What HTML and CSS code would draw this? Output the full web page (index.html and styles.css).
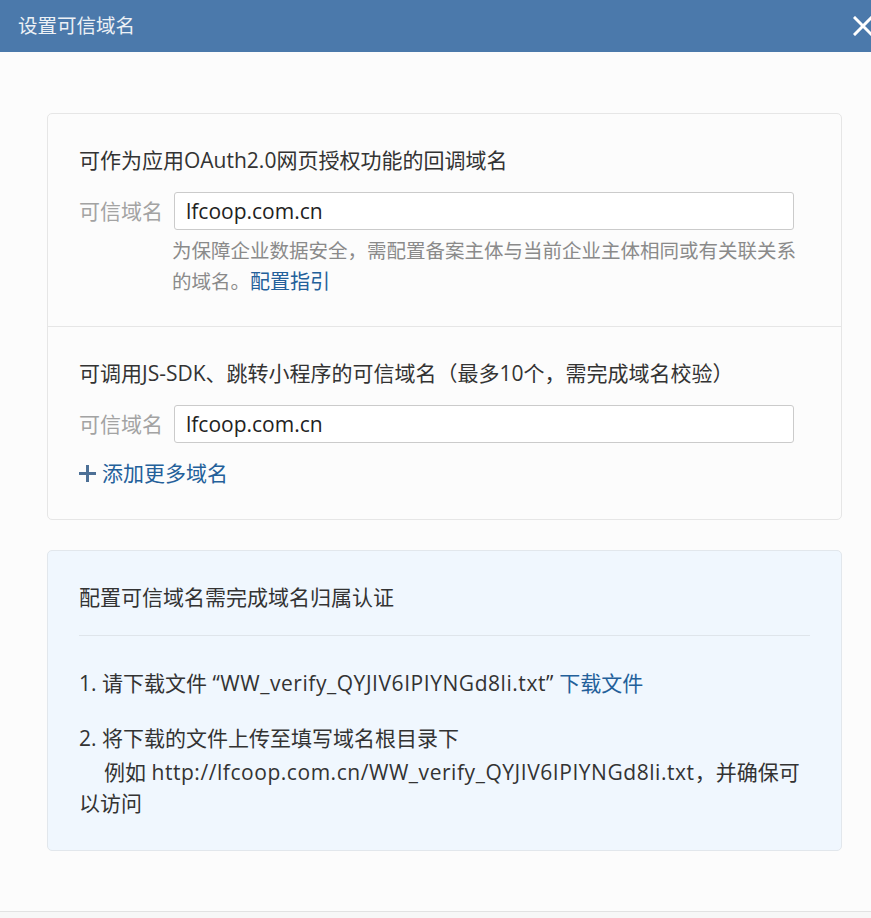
FILE: index.html
```html
<!DOCTYPE html>
<html lang="zh-CN">
<head>
<meta charset="utf-8">
<title>设置可信域名</title>
<link rel="stylesheet" href="styles.css">
</head>
<body>
<div class="dialog">
  <div class="dlg-head">
    <div class="dlg-title">设置可信域名</div>
    <svg class="dlg-close" width="20" height="20" viewBox="0 0 20 20"><path d="M2 2 L18 18 M18 2 L2 18" stroke="#ffffff" stroke-width="3" stroke-linecap="square" fill="none"/></svg>
  </div>
  <div class="dlg-body">
    <div class="card">
      <div class="section sec-one">
        <div class="sec-title">可作为应用OAuth2.0网页授权功能的回调域名</div>
        <div class="field">
          <span class="field-label">可信域名</span>
          <div class="field-input">lfcoop.com.cn</div>
        </div>
        <div class="hint">为保障企业数据安全，需配置备案主体与当前企业主体相同或有关联关系的域名。<a class="link">配置指引</a></div>
      </div>
      <div class="section sec-two">
        <div class="sec-title">可调用JS-SDK、跳转小程序的可信域名（最多10个，需完成域名校验）</div>
        <div class="field">
          <span class="field-label">可信域名</span>
          <div class="field-input">lfcoop.com.cn</div>
        </div>
        <div class="add-more">
          <svg class="plus" width="17" height="17" viewBox="0 0 17 17"><path d="M8.5 0 V17 M0 8.5 H17" stroke="#4d7096" stroke-width="3" fill="none"/></svg>
          <a class="link">添加更多域名</a>
        </div>
      </div>
    </div>
    <div class="verify">
      <div class="verify-title">配置可信域名需完成域名归属认证</div>
      <div class="verify-sep"></div>
      <div class="step">1. 请下载文件 <span class="latin">“WW_verify_QYJIV6IPIYNGd8li.txt”</span> <a class="link">下载文件</a></div>
      <div class="step step-two">2. 将下载的文件上传至填写域名根目录下</div>
      <div class="step-note">例如 <span class="latin">http://lfcoop.com.cn/WW_verify_QYJIV6IPIYNGd8li.txt</span>，并确保可以访问</div>
    </div>
  </div>
  <div class="dlg-foot"></div>
</div>
</body>
</html>
```

FILE: styles.css
```css
* { box-sizing: border-box; }
html, body { margin: 0; padding: 0; }
body {
  background: #fcfcfc;
  font-family: "Open Sans", "Noto Sans CJK SC", sans-serif;
  color: #333333;
  font-size: 21px;
  overflow: hidden;
}
.dialog { width: 871px; }
.dlg-head {
  height: 52px;
  background: #4b79ab;
  display: flex;
  align-items: center;
  justify-content: space-between;
  padding-left: 18px;
}
.dlg-title {
  color: #edf1f6;
  font-size: 19.5px;
  line-height: 24px;
}
.dlg-close { margin-right: -2px; }
.dlg-body {
  padding: 61px 29px 60px 47px;
}
.card {
  border: 1px solid #e6e6e6;
  border-radius: 5px;
  background: #fcfcfc;
}
.section { padding: 31px 31px 0 31px; }
.sec-one { padding-bottom: 29px; border-bottom: 1px solid #e6e6e6; }
.sec-two { padding-top: 31px; padding-bottom: 31px; }
.sec-title { line-height: 30px; color: #333; }
.field {
  display: flex;
  align-items: center;
  margin-top: 17px;
}
.field-label {
  width: 95px;
  flex: none;
  color: #a3a3a3;
  line-height: 30px;
}
.field-input {
  width: 620px;
  height: 38px;
  border: 1px solid #cbcbcb;
  border-radius: 3px;
  background: #ffffff;
  padding-left: 11px;
  line-height: 36px;
  color: #222222;
}
.hint {
  margin: 5px 0 0 93px;
  width: 632px;
  font-size: 19.5px;
  line-height: 31px;
  color: #8a8a8a;
  word-break: break-all;
}
.hint .link { font-size: 20px; }
.link { color: #23609a; text-decoration: none; }
.add-more {
  margin-top: 15px;
  display: flex;
  align-items: center;
  gap: 6px;
  line-height: 30px;
}
.verify {
  margin-top: 30px;
  border: 1px solid #e2e7ec;
  border-radius: 5px;
  background: #f0f7fe;
  padding: 31px 31px 31px 31px;
}
.verify-title { line-height: 30px; color: #333; }
.verify-sep { height: 1px; background: #dfe5eb; margin: 23px 0 32px; }
.step { line-height: 31px; color: #333; }
.step-two { margin-top: 24px; }
.step-note { line-height: 31px; text-indent: 25px; margin-top: 3px; }
.latin { letter-spacing: 0.55px; }
.dlg-foot {
  height: 8px;
  border-top: 1px solid #e2e2e2;
  background: #f7f7f7;
}
```
